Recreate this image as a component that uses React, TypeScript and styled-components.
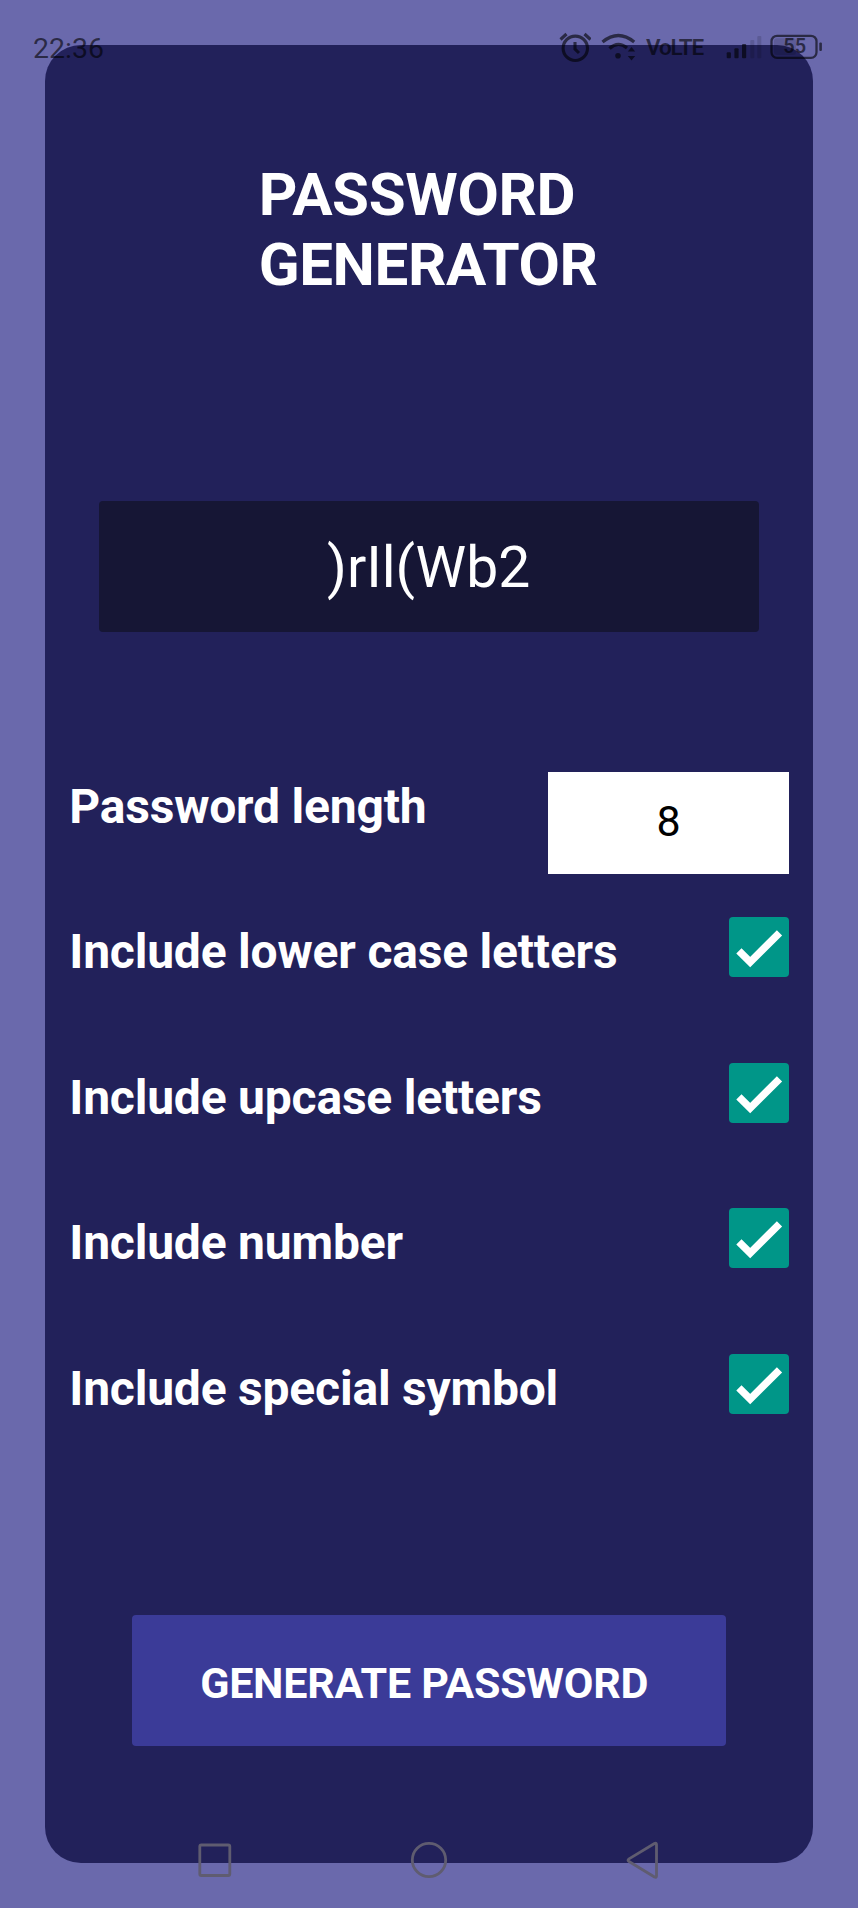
import React, { useState } from "react";
import styled, { createGlobalStyle } from "styled-components";

const GlobalStyle = createGlobalStyle`
  * { box-sizing: border-box; }
  body {
    margin: 0;
    background: #6a69ac;
    font-family: Roboto, sans-serif;
    color: #fff;
  }
`;

const Screen = styled.div`
  position: relative;
  width: 858px;
  height: 1908px;
  padding: 45px 45px 45.5px 45.3px;
  background: #6a69ac;
  overflow: hidden;
`;

const Card = styled.main`
  display: flex;
  flex-direction: column;
  align-items: center;
  height: 100%;
  padding: 115px 24px 0;
  border-radius: 36px;
  background: #22215a;
`;

const Title = styled.h1`
  margin: 0;
  width: 341px;
  font-size: 60px;
  line-height: 70px;
  font-weight: 700;
  letter-spacing: -0.35px;
`;

const Output = styled.output`
  display: flex;
  align-items: center;
  justify-content: center;
  width: 660px;
  height: 131px;
  margin-top: 201px;
  padding: 2px 1px 0 0;
  border-radius: 4px;
  background: #161635;
  font-size: 57px;
`;

const Options = styled.section`
  align-self: stretch;
  margin-top: 139.7px;
`;

const Row = styled.label`
  display: flex;
  align-items: flex-start;
  justify-content: space-between;
  height: 145.5px;
`;

const RowText = styled.span`
  margin-top: 7px;
  font-size: 48px;
  line-height: 56px;
  font-weight: 700;
  letter-spacing: -0.2px;
  white-space: nowrap;
`;

const LengthInput = styled.input`
  width: 241px;
  height: 102.7px;
  padding: 0 0 4px;
  border: 0;
  outline: 0;
  background: #fff;
  color: #000;
  font: 400 43px Roboto, sans-serif;
  text-align: center;
`;

const Check = styled.button`
  width: 60px;
  height: 60px;
  padding: 0;
  border: 0;
  border-radius: 4px;
  background: #009688;
  svg { display: block; }
`;

const Generate = styled.button`
  width: 594px;
  height: 131px;
  margin-top: 116.2px;
  padding: 4px 10px 0 0;
  border: 0;
  border-radius: 4px;
  background: #3b3b98;
  color: #fff;
  font: 700 43px Roboto, sans-serif;
  letter-spacing: -0.25px;
`;

const StatusBar = styled.header`
  position: absolute;
  inset: 28px 36px auto 33px;
  display: flex;
  align-items: center;
  height: 40px;
  color: rgba(0, 0, 0, 0.6);
`;

const Clock = styled.span`
  flex: 1;
  font-size: 28.5px;
`;

const Network = styled.span`
  width: 57px;
  margin: 0 23px 2px 10px;
  font-size: 22.5px;
  font-weight: 600;
  letter-spacing: -1.2px;
`;

const StatusIcon = styled.svg<{ $gap?: number }>`
  flex: none;
  margin-left: ${(p) => p.$gap ?? 0}px;
  fill: none;
  stroke: currentColor;
`;

const NavBar = styled.nav`
  position: absolute;
  inset: auto 199px 28px 197px;
  display: flex;
  align-items: center;
  justify-content: space-between;
  height: 40px;
  svg { fill: none; stroke: #5f5c70; stroke-width: 2.8; stroke-linejoin: round; }
`;

const initialOptions = [
  { label: "Include lower case letters", on: true },
  { label: "Include upcase letters", on: true },
  { label: "Include number", on: true },
  { label: "Include special symbol", on: true },
];

export default function App() {
  const [length, setLength] = useState("8");
  const [options, setOptions] = useState(initialOptions);
  const toggle = (index: number) =>
    setOptions(options.map((o, i) => (i === index ? { ...o, on: !o.on } : o)));

  return (
    <Screen>
      <GlobalStyle />
      <Card>
        <Title>PASSWORD GENERATOR</Title>
        <Output>{")rIl(Wb2"}</Output>
        <Options>
          <Row>
            <RowText>Password length</RowText>
            <LengthInput value={length} onChange={(e) => setLength(e.target.value)} />
          </Row>
          {options.map((option, index) => (
            <Row key={option.label}>
              <RowText>{option.label}</RowText>
              <Check type="button" role="checkbox" aria-checked={option.on} onClick={() => toggle(index)}>
                {option.on && (
                  <svg width="60" height="60" viewBox="0 0 60 60">
                    <path d="M9.900 33.800 21.200 45.100 50.500 15.800" fill="none" stroke="#fff" strokeWidth="7.4" />
                  </svg>
                )}
              </Check>
            </Row>
          ))}
        </Options>
        <Generate type="button">GENERATE PASSWORD</Generate>
      </Card>

      <StatusBar>
        <Clock>22:36</Clock>
        <StatusIcon width="32" height="40" viewBox="560 28 32 40" strokeWidth="3.1">
          <circle cx="576.3" cy="48.3" r="12.2" />
          <path d="M576 42v7l4 4M561.5 39.500l6-5.500M585.500 34l6 5.500" />
        </StatusIcon>
        <StatusIcon $gap={10} width="35" height="40" viewBox="602 28 35 40" strokeWidth="3.3">
          <path d="M603.5 42q15.800-13 31.700 0M610.500 48.500q8.500-8 17.500-.5" />
          <g fill="currentColor" stroke="none">
            <circle cx="619" cy="55.8" r="2.8" />
            <path d="M632.500 47l3.700 4.500h-7.400zM632.500 60.500l3.700-4.500h-7.400z" />
          </g>
        </StatusIcon>
        <Network>VoLTE</Network>
        <StatusIcon width="36" height="40" viewBox="726 28 36 40">
          <g fill="currentColor" stroke="none">
            <rect x="726.7" y="52.3" width="4.2" height="6" rx="1" />
            <rect x="734.4" y="48.3" width="4.2" height="10" rx="1" />
            <rect x="742" y="44" width="4.2" height="14.300" rx="1" />
            <g opacity=".22">
              <rect x="750.3" y="40" width="4" height="18.300" rx="1" />
              <rect x="757.3" y="36" width="4" height="22.300" rx="1" />
            </g>
          </g>
        </StatusIcon>
        <StatusIcon $gap={8} width="52" height="40" viewBox="770 28 52 40">
          <rect x="771.5" y="35.800" width="45" height="22" rx="5.500" strokeWidth="2.3" />
          <g fill="currentColor" stroke="none">
            <rect x="774" y="38.300" width="22" height="16.800" rx="3" opacity=".2" />
            <rect x="819.3" y="42.500" width="2.600" height="8.500" rx="1" />
            <text x="794.8" y="53.400" textAnchor="middle" fontSize="20" fontWeight="600">55</text>
          </g>
        </StatusIcon>
      </StatusBar>

      <NavBar>
        <svg width="36" height="40" viewBox="197 1840 36 40">
          <rect x="199.8" y="1845" width="30" height="30.500" rx="1.500" />
        </svg>
        <svg width="38" height="40" viewBox="410 1840 38 40">
          <circle cx="429" cy="1860" r="16.700" />
        </svg>
        <svg width="34" height="40" viewBox="625 1840 34 40">
          <path d="M654.500 1843.500q2-.9 2 1v31.500q0 1.900-2 1L629 1861.500q-2-1.300 0-2.600z" />
        </svg>
      </NavBar>
    </Screen>
  );
}
